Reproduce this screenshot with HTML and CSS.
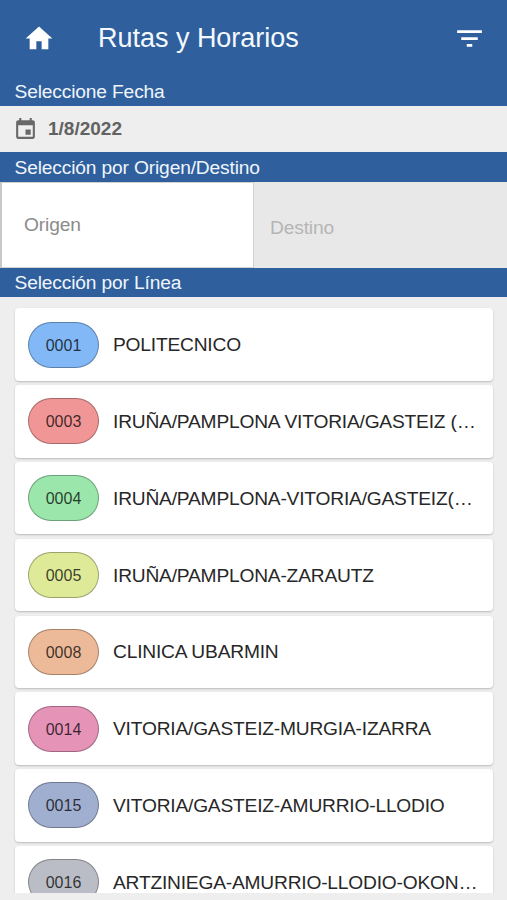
FILE: index.html
```html
<!DOCTYPE html>
<html lang="es">
<head>
<meta charset="utf-8">
<title>Rutas y Horarios</title>
<link rel="stylesheet" href="styles.css">
</head>
<body>
<header class="topbar">
  <svg class="home" viewBox="0 0 24 24"><path d="M10 20v-6h4v6h5v-8h3L12 3 2 12h3v8z"/></svg>
  <h1>Rutas y Horarios</h1>
  <svg class="filter" viewBox="0 0 24 24"><path d="M10 18h4v-2h-4v2zM3 6v2h18V6H3zm3 7h12v-2H6v2z"/></svg>
</header>
<h2 class="band band-date">Seleccione Fecha</h2>
<div class="date">
  <svg viewBox="0 0 24 24"><path d="M17 12h-5v5h5v-5zM16 1v2H8V1H6v2H5c-1.11 0-1.99.9-1.99 2L3 19c0 1.1.89 2 2 2h14c1.1 0 2-.9 2-2V5c0-1.1-.9-2-2-2h-1V1h-2zm3 18H5V8h14v11z"/></svg>
  <span>1/8/2022</span>
</div>
<h2 class="band band-stops">Selección por Origen/Destino</h2>
<div class="stops">
  <div class="origin">Origen</div>
  <div class="destination">Destino</div>
</div>
<h2 class="band band-line">Selección por Línea</h2>
<main class="lines">
  <div class="card"><span class="code blue">0001</span><span class="name">POLITECNICO</span></div>
  <div class="card"><span class="code red">0003</span><span class="name">IRUÑA/PAMPLONA VITORIA/GASTEIZ (…</span></div>
  <div class="card"><span class="code green">0004</span><span class="name">IRUÑA/PAMPLONA-VITORIA/GASTEIZ(…</span></div>
  <div class="card"><span class="code lime">0005</span><span class="name">IRUÑA/PAMPLONA-ZARAUTZ</span></div>
  <div class="card"><span class="code orange">0008</span><span class="name">CLINICA UBARMIN</span></div>
  <div class="card"><span class="code pink">0014</span><span class="name">VITORIA/GASTEIZ-MURGIA-IZARRA</span></div>
  <div class="card"><span class="code indigo">0015</span><span class="name">VITORIA/GASTEIZ-AMURRIO-LLODIO</span></div>
  <div class="card"><span class="code gray">0016</span><span class="name">ARTZINIEGA-AMURRIO-LLODIO-OKON…</span></div>
</main>
</body>
</html>
```

FILE: styles.css
```css
* { box-sizing: border-box; }
body {
  margin: 0;
  height: 900px;
  overflow: hidden;
  display: flex;
  flex-direction: column;
  background: #eeeeee;
  font-family: "Liberation Sans", Arial, sans-serif;
  color: #272727;
}
h1, h2 { margin: 0; font-weight: 400; }
.topbar {
  flex: none;
  height: 77px;
  display: flex;
  align-items: center;
  padding: 0 21px 0 23px;
  background: #2f609d;
  color: #f5f9fe;
}
.topbar svg { fill: #ffffff; flex: none; }
.home { width: 32px; height: 33px; }
.filter { width: 33px; height: 33px; }
.topbar h1 {
  flex: 1;
  margin-left: 43px;
  padding-bottom: 1px;
  font-size: 27px;
  line-height: 32px;
  letter-spacing: -0.02px;
}
.band {
  flex: none;
  padding-left: 14.5px;
  background: #2f609d;
  color: #f0f5fc;
  font-size: 19.2px;
  letter-spacing: -0.15px;
}
.band-date { height: 29px; line-height: 29px; }
.band-stops { height: 30px; line-height: 31px; }
.band-line { height: 29px; line-height: 30px; }
.date {
  flex: none;
  height: 46px;
  display: flex;
  align-items: center;
  gap: 10px;
  padding-left: 13px;
  color: #626262;
  font-size: 19px;
  font-weight: 700;
}
.date svg { width: 25px; height: 25px; fill: #686868; }
.stops {
  flex: none;
  height: 86px;
  display: flex;
  background: #e8e8e8;
  font-size: 19.2px;
  letter-spacing: -0.15px;
}
.origin {
  width: 254px;
  padding: 31px 0 0 22px;
  background: #ffffff;
  border: 1px solid #d2d2d2;
  border-left: 2px solid #c8c8c8;
  line-height: 22px;
  color: #8b8b8b;
}
.destination {
  padding: 35px 0 0 16px;
  line-height: 22px;
  color: #b5b5b5;
}
.lines {
  flex: none;
  height: 596px;
  overflow: hidden;
  display: flex;
  flex-direction: column;
  gap: 4.3px;
  padding: 11.4px 14px 0 15px;
}
.card {
  flex: none;
  height: 72.5px;
  display: flex;
  align-items: center;
  gap: 14px;
  padding: 0 14px 0 13px;
  background: #ffffff;
  border-radius: 4px;
  box-shadow: 0 1px 2px rgba(0, 0, 0, 0.22);
}
.code {
  flex: none;
  width: 71px;
  height: 46px;
  border: 1px solid rgba(0, 0, 0, 0.3);
  border-radius: 23px;
  text-align: center;
  font-size: 16px;
  line-height: 45px;
  color: rgba(0, 0, 0, 0.75);
}
.name {
  padding-top: 1px;
  white-space: nowrap;
  font-size: 19.2px;
  line-height: 26px;
  letter-spacing: -0.2px;
}
.blue { background: #82b8f5; }
.red { background: #f19696; }
.green { background: #9be6ab; }
.lime { background: #dfea99; }
.orange { background: #ecba99; }
.pink { background: #e693b8; }
.indigo { background: #a0aed0; }
.gray { background: #babdc5; }
```
